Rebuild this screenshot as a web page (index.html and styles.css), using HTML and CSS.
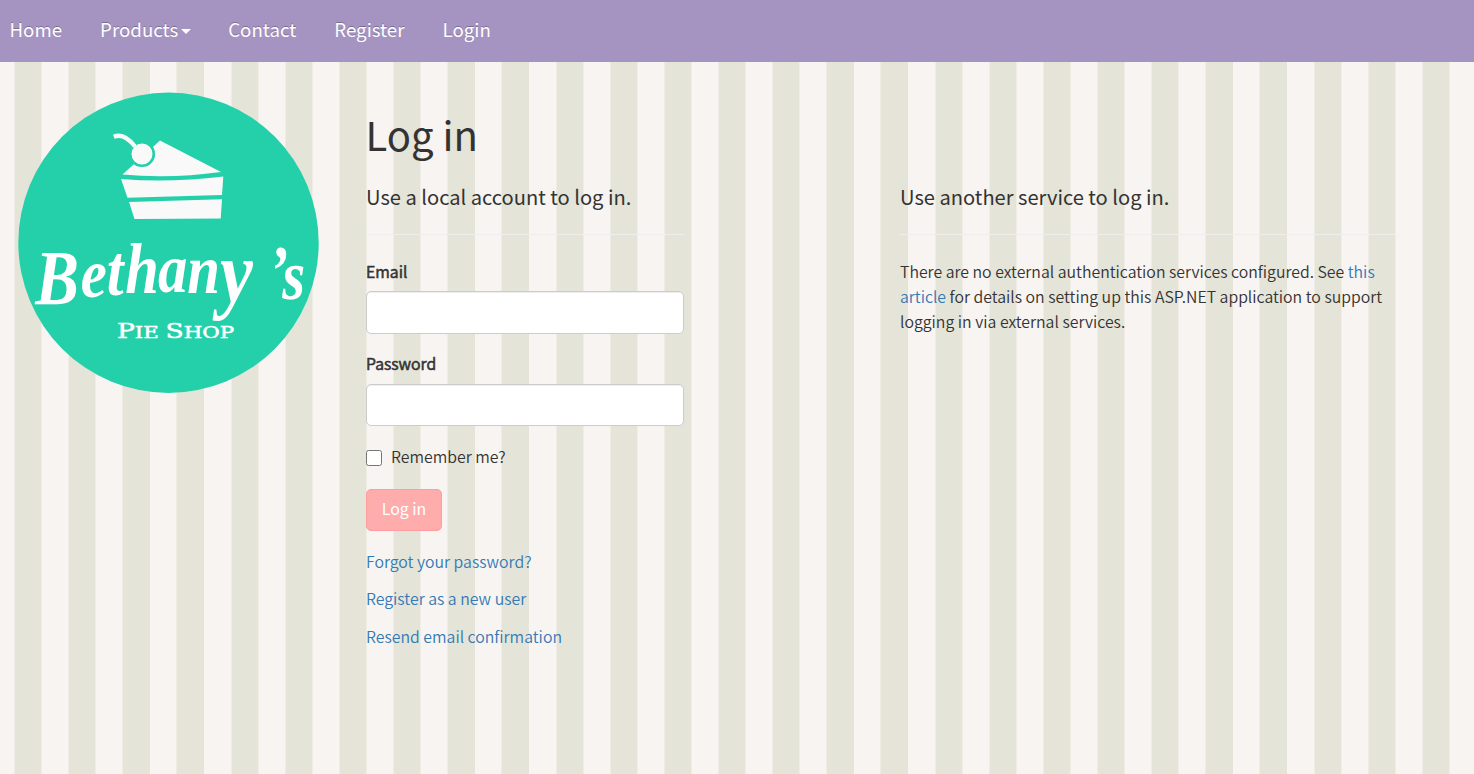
FILE: index.html
```
<!DOCTYPE html>
<html lang="en">
<head>
<meta charset="utf-8">
<title>Log in - Bethany's Pie Shop</title>
<link rel="stylesheet" href="styles.css">
</head>
<body>
<nav class="navbar">
  <a href="#">Home</a>
  <a href="#">Products<span class="caret"></span></a>
  <a href="#">Contact</a>
  <a href="#">Register</a>
  <a href="#">Login</a>
</nav>
<div class="page">
  <svg class="logo" viewBox="18 92 301 301" role="img" aria-label="Bethany's Pie Shop">
    <circle cx="168.5" cy="242.700" r="150.200" fill="#24d0a9"/>
    <g fill="#f9f9f9">
      <path d="M122.5 174.5L160 140.5L221 172Q170 179 122.5 174.500Z"/>
      <path d="M121 179Q170 183 223.300 176.500L222 195L127.500 197.700Z"/>
      <path d="M129 202L222 199.300L220.700 218.500L134.500 219Z"/>
      <circle cx="142" cy="154" r="11.800" stroke="#24d0a9" stroke-width="2.600"/>
      <path d="M113.800 136.800Q124 132.500 135 146.500" fill="none" stroke="#f9f9f9" stroke-width="4.300"/>
    </g>
    <text class="script" transform="scale(.84 1)" y="304 297 295 293 292 293 302 294 299" x="42 96 127 149 188 223 262 320 336"><tspan class="initial">B</tspan>e<tspan class="tall">th</tspan>an<tspan class="tail">y</tspan>’s</text>
    <text class="subtitle" x="117" y="338" textLength="117" lengthAdjust="spacingAndGlyphs"><tspan class="cap">P</tspan>IE <tspan class="cap">S</tspan>HOP</text>
  </svg>
  <main>
    <h1>Log in</h1>
    <div class="columns">
      <form class="local">
        <h4>Use a local account to log in.</h4>
        <hr>
        <label class="field-label" for="email">Email</label>
        <input class="field" id="email" type="text">
        <label class="field-label second" for="password">Password</label>
        <input class="field" id="password" type="password">
        <label class="remember"><input type="checkbox"><span>Remember me?</span></label>
        <button type="button">Log in</button>
        <p><a href="#">Forgot your password?</a></p>
        <p><a href="#">Register as a new user</a></p>
        <p><a href="#">Resend email confirmation</a></p>
      </form>
      <section class="external">
        <h4>Use another service to log in.</h4>
        <hr>
        <p>There are no external authentication services configured. See <a href="#">this<br>article</a> for details on setting up this ASP.NET application to support<br>logging in via external services.</p>
      </section>
    </div>
  </main>
</div>
</body>
</html>
```
FILE: styles.css
```
* { box-sizing: border-box; }
body {
  margin: 0;
  min-height: 774px;
  color: #333;
  font: 350 15.840px/25px "Noto Sans CJK SC", sans-serif;
  background: repeating-linear-gradient(90deg, #f8f4f1 0 14px, #efece5 14px 15px, #e5e4d8 15px 41.300px, #f0ede6 41.300px 42px, #f8f4f1 42px 54.150px);
}
a { color: #337ab7; text-decoration: none; }
.navbar {
  display: flex;
  align-items: center;
  gap: 38px;
  height: 62px;
  padding: 0 9.500px 5px;
  background: #a593c2;
  font-size: 18.700px;
  font-weight: 400;
}
.navbar a { color: #fff; text-shadow: 0 -1px 0 rgba(0,0,0,.25); white-space: nowrap; }
.caret {
  display: inline-block;
  margin: 0 -1px 0 3px;
  vertical-align: middle;
  border: 5px solid transparent;
  border-top-color: #fff;
  border-bottom: 0;
}
.page { display: flex; align-items: flex-start; padding: 30px 0 0 18px; }
.logo { width: 301px; height: 301px; flex: none; }
.script { font: italic 700 70px "Liberation Serif", serif; fill: #fff; }
.initial { font-size: 78px; }
.tall { font-size: 72px; }
.tail { font-size: 88px; }
.subtitle { font: 400 16px "DejaVu Serif", serif; fill: #fff; stroke: #fff; stroke-width: .5px; }
.cap { font-size: 20px; }
main { margin-left: 47px; padding-top: 17px; }
h1 { margin: 0 0 0 -.5px; font-size: 40px; line-height: 50px; font-weight: 400; }
.columns { display: flex; gap: 216px; }
.local { width: 318px; }
.external { width: 495px; }
h4 { margin: 25px 0 0; font-size: 20.100px; line-height: 25px; font-weight: 400; }
hr { margin: 25px 0 24px; border: 0; border-top: 1px solid #eee; }
.field-label { display: block; margin-bottom: 7px; -webkit-text-stroke: .6px #333; }
.field-label.second { margin-bottom: 8px; }
.field {
  display: block;
  width: 318px;
  height: 42px;
  margin-bottom: 18px;
  padding: 8px 12px;
  border: 1px solid #ccc;
  border-radius: 5px;
  background: #fff;
  box-shadow: inset 0 1px 1px rgba(0,0,0,.075);
}
#email { height: 43px; margin-bottom: 17px; }
.remember { display: flex; align-items: center; gap: 9px; }
.remember input { width: 16px; height: 16px; margin: 2px 0 0; }
button {
  display: block;
  width: 76px;
  height: 42px;
  margin: 20px 0 17.900px;
  padding: 0 0 3px;
  border: 1px solid #ff9c9f;
  border-radius: 5px;
  color: #fff;
  background: #ffacac;
  font: inherit;
  font-weight: 400;
}
p { margin: 0 0 12.500px; white-space: nowrap; }
```
